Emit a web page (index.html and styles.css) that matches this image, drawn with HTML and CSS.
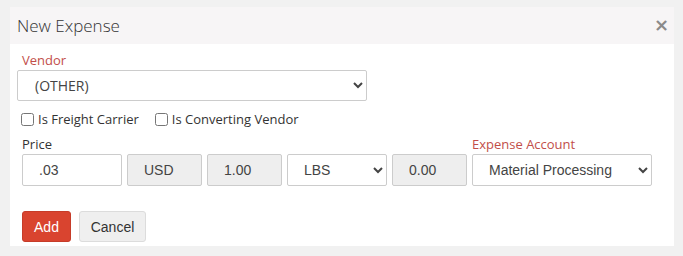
FILE: index.html
```html
<!DOCTYPE html>
<html lang="en">
<head>
  <meta charset="UTF-8" />
  <title>New Expense</title>
  <link rel="stylesheet" href="styles.css">
</head>
<body>
  <div class="modal">
    <div class="modal-header">
      <span class="modal-title">New Expense</span>
      <span class="close">&times;</span>
    </div>
    <div class="modal-body">
      <label class="req-label">Vendor</label>
      <div class="select-wrap vendor">
        <select class="field">
          <option>(OTHER)</option>
        </select>
      </div>

      <div class="checks">
        <label><input type="checkbox" /> Is Freight Carrier</label>
        <label><input type="checkbox" /> Is Converting Vendor</label>
      </div>

      <div class="price-row">
        <div class="col col-price">
          <label class="plain-label">Price</label>
          <input class="field" type="text" value=".03" />
        </div>
        <div class="col col-small">
          <input class="field readonly" type="text" value="USD" readonly />
        </div>
        <div class="col col-small">
          <input class="field readonly" type="text" value="1.00" readonly />
        </div>
        <div class="col col-unit">
          <select class="field">
            <option>LBS</option>
          </select>
        </div>
        <div class="col col-small">
          <input class="field readonly" type="text" value="0.00" readonly />
        </div>
        <div class="col col-account">
          <label class="req-label">Expense Account</label>
          <select class="field">
            <option>Material Processing</option>
          </select>
        </div>
      </div>

      <div class="actions">
        <button class="btn btn-add">Add</button>
        <button class="btn btn-cancel">Cancel</button>
      </div>
    </div>
  </div>
</body>
</html>
```

FILE: styles.css
```css
body {
  margin: 0;
  padding: 7px 9px 0 10px;
  background-color: #f1f1f1;
  font-family: "Open Sans", sans-serif;
  color: #333;
}
.modal {
  background-color: white;
  height: 239px;
}
.modal-header {
  display: flex;
  justify-content: space-between;
  align-items: center;
  height: 37px;
  padding: 0 5px 0 7px;
  background-color: #f7f5f6;
}
.modal-title {
  font-size: 17px;
  font-weight: 300;
  color: #333;
}
.close {
  font-family: "DejaVu Sans", sans-serif;
  font-size: 18px;
  font-weight: bold;
  color: #8a8a8a;
  margin-top: -2px;
}
.modal-body {
  padding: 8px 22px 0 7px;
}
.req-label {
  display: block;
  font-size: 13px;
  color: #c24e49;
  margin-left: 5px;
  height: 18px;
  line-height: 16px;
}
.plain-label {
  display: block;
  font-size: 13px;
  color: #333;
  height: 18px;
  line-height: 16px;
}
.col-price .plain-label, .col-account .req-label {
  margin-left: 0;
}
.field {
  box-sizing: border-box;
  width: 100%;
  height: 32px;
  border: 1px solid #ccc;
  border-radius: 2px;
  background-color: white;
  font-family: "Liberation Sans", Arial, sans-serif;
  font-size: 14px;
  color: #444;
  padding: 0 12px;
  margin: 0;
}
select.field {
  padding-left: 12px;
}
.vendor {
  width: 350px;
}
.vendor .field {
  font-family: "Open Sans", sans-serif;
  font-size: 14px;
  padding-left: 13px;
  height: 31px;
}
.readonly {
  background-color: #eee;
}
.checks {
  display: flex;
  gap: 16px;
  margin: 7px 0 0 4px;
  font-size: 13px;
  color: #333;
  height: 22px;
}
.checks label {
  display: flex;
  align-items: center;
  gap: 4px;
}
.checks input {
  margin: 0;
  width: 13px;
  height: 13px;
}
.price-row {
  display: flex;
  align-items: flex-end;
  gap: 5px;
  margin: 6px 0 0 5px;
}
.col-price { width: 100px; }
.col-small { width: 75px; }
.col-unit { width: 100px; }
.col-account { width: 180px; }
.col-price .field {
  padding-left: 16px;
}
.col-small .field {
  padding-left: 16px;
}
.actions {
  display: flex;
  gap: 8px;
  margin: 25px 0 0 5px;
}
.btn {
  font-family: "Liberation Sans", Arial, sans-serif;
  font-size: 14px;
  height: 31px;
  border-radius: 3px;
  cursor: pointer;
  padding: 0;
}
.btn-add {
  background-color: #d9442f;
  border: 1px solid #c63c29;
  color: white;
  width: 49px;
}
.btn-cancel {
  background-color: #efefef;
  border: 1px solid #dcdcdc;
  color: #333;
  width: 67px;
}
```
